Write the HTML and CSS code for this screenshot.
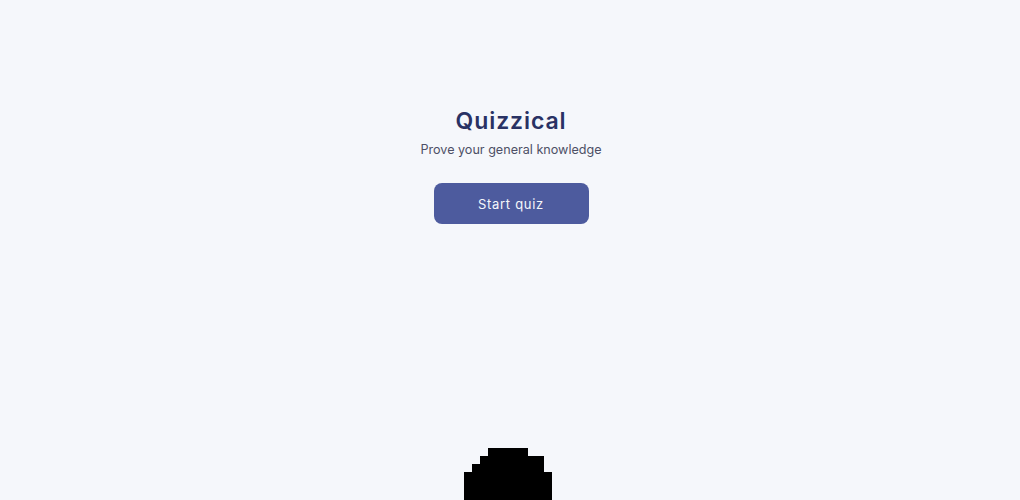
FILE: index.html
```html
<!DOCTYPE html>
<html lang="en">
<head>
<meta charset="utf-8">
<title>Quizzical</title>
<link rel="stylesheet" href="styles.css">
</head>
<body>
<main class="intro">
  <h1 class="title">Quizzical</h1>
  <p class="subtitle">Prove your general knowledge</p>
  <button class="start-btn">Start quiz</button>
</main>
<svg class="blob" width="88" height="52" viewBox="0 0 88 52" aria-hidden="true">
  <path d="M24 0H64V8H80V24H88V52H0V24H8V16H16V8H24Z" fill="#000"/>
</svg>
</body>
</html>
```

FILE: styles.css
```css
html, body {
  margin: 0;
  padding: 0;
  height: 100%;
}
body {
  background: #F5F7FB;
  font-family: Inter, "Noto Sans", sans-serif;
  overflow: hidden;
  position: relative;
}
.intro {
  display: flex;
  flex-direction: column;
  align-items: center;
  padding: 105px 0 0 2px;
}
.title {
  margin: 0;
  font-size: 23px;
  font-weight: 600;
  color: #293264;
  letter-spacing: 0.9px;
  line-height: 32px;
}
.subtitle {
  margin: 4px 0 0;
  font-size: 12.6px;
  color: #4D5066;
  line-height: 18px;
}
.start-btn {
  margin-top: 24px;
  width: 155px;
  height: 41px;
  border: none;
  border-radius: 8px;
  background: #4D5B9E;
  color: #F5F7FB;
  font-family: Inter, "Noto Sans", sans-serif;
  font-size: 13px;
  letter-spacing: 0.7px;
}
.blob {
  position: absolute;
  left: 464px;
  top: 448px;
  display: block;
}
```
